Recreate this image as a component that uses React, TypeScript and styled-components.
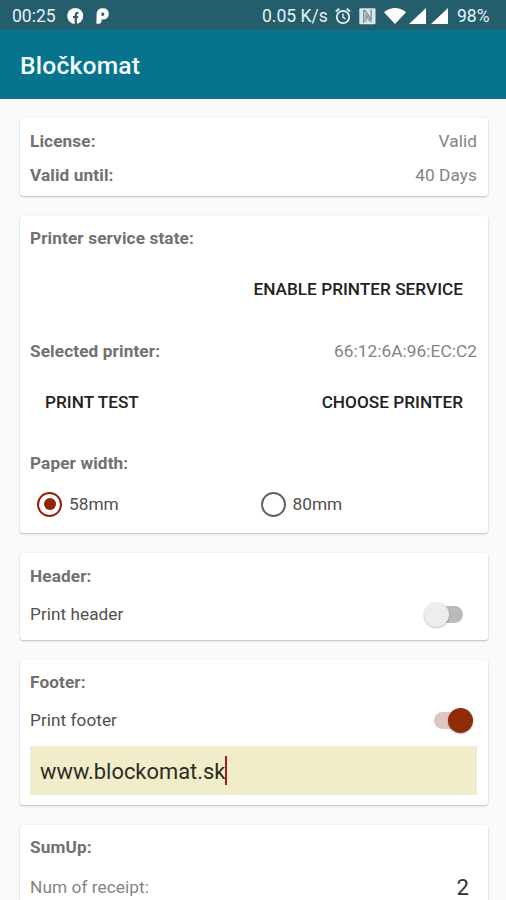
import React, { useState } from "react";
import styled, { createGlobalStyle } from "styled-components";

const GlobalStyle = createGlobalStyle`
  * { box-sizing: border-box; }
  html, body { margin: 0; height: 900px; overflow: hidden; background: #fafafa; }
`;

const Screen = styled.div`
  width: 506px;
  height: 900px;
  overflow: hidden;
  background: #fafafa;
  font-family: Roboto, "Liberation Sans", sans-serif;
  font-size: 17.2px;
  color: #424242;
`;

const StatusBar = styled.div`
  height: 30px;
  padding: 2px 16px 0 12px;
  display: flex;
  align-items: center;
  background: #245e6d;
  color: #e9f1f3;
`;

const StatusText = styled.span<{ $width: number; $gap?: number }>`
  width: ${(p) => p.$width}px;
  margin-left: ${(p) => p.$gap ?? 0}px;
  font-size: 17.5px;
  white-space: nowrap;
`;

const StatusIcon = styled.svg<{ $gap: number }>`
  display: block;
  flex: none;
  margin-left: ${(p) => p.$gap}px;
`;

const Spacer = styled.div`
  flex: 1;
`;

const AppBar = styled.header`
  height: 69px;
  padding: 2px 20px 0;
  display: flex;
  align-items: center;
  background: #06748d;
  border-bottom: 1px solid #2b6678;
`;

const AppTitle = styled.h1`
  margin: 0;
  color: #f4fafb;
  font-size: 24.6px;
  font-weight: 500;
  letter-spacing: 0.22px;
`;

const CardList = styled.main`
  padding: 19px 18px 0 20px;
  display: flex;
  flex-direction: column;
  gap: 20px;
`;

const Card = styled.section<{ $bottom: number }>`
  padding: 6px 11px ${(p) => p.$bottom}px 10px;
  border-radius: 3px;
  background: #fff;
  box-shadow: 0 1px 2px rgba(0, 0, 0, 0.24), 0 0 2px rgba(0, 0, 0, 0.05);
`;

const Row = styled.div<{ $height: number; $top?: number }>`
  height: ${(p) => p.$height}px;
  margin-top: ${(p) => p.$top ?? 0}px;
  display: flex;
  align-items: center;
  justify-content: space-between;
`;

const TitleRow = styled(Row)`
  padding-bottom: 2px;
`;

const Label = styled.span`
  color: #717171;
  font-weight: 700;
  letter-spacing: 0.12px;
`;

const Value = styled.span`
  color: #848484;
  font-size: 17.3px;
  letter-spacing: 0.05px;
`;

const Caption = styled.span`
  color: #505050;
  letter-spacing: 0.05px;
`;

const TextButton = styled.button`
  margin: 0 14px 0 auto;
  padding: 0;
  border: 0;
  background: none;
  color: #222;
  font: 500 17.2px Roboto, "Liberation Sans", sans-serif;
  letter-spacing: 0.02px;

  &:first-child:not(:last-child) {
    margin-left: 15px;
  }
`;

const RadioGroup = styled.div`
  height: 46px;
  padding-left: 7px;
  display: grid;
  grid-template-columns: 223.5px 1fr;
  align-items: center;
`;

const RadioOption = styled.button`
  display: flex;
  align-items: center;
  gap: 7px;
  padding: 0;
  border: 0;
  background: none;
  color: #505050;
  font: 400 17.3px Roboto, "Liberation Sans", sans-serif;
`;

const RadioMark = styled.span<{ $checked: boolean }>`
  width: 25px;
  height: 25px;
  display: flex;
  align-items: center;
  justify-content: center;
  border: 2.3px solid ${(p) => (p.$checked ? "#951d0e" : "#626262")};
  border-radius: 50%;

  &::after {
    content: "";
    width: 12px;
    height: 12px;
    border-radius: 50%;
    background: ${(p) => (p.$checked ? "#932400" : "transparent")};
  }
`;

const SwitchTrack = styled.button<{ $on: boolean }>`
  width: 39px;
  height: 17px;
  margin-right: ${(p) => (p.$on ? 4 : 14)}px;
  padding: 0;
  display: flex;
  align-items: center;
  justify-content: ${(p) => (p.$on ? "flex-end" : "flex-start")};
  border: 0;
  border-radius: 9px;
  background: ${(p) => (p.$on ? "#dfc6bf" : "#bababa")};
`;

const SwitchThumb = styled.span<{ $on: boolean }>`
  width: 25px;
  height: 25px;
  flex: none;
  border-radius: 50%;
  background: ${(p) => (p.$on ? "#8f2b05" : "#ededed")};
  box-shadow: 0 1px 2px rgba(0, 0, 0, 0.26);
`;

const Field = styled.div`
  height: 49px;
  margin-top: 5px;
  padding: 2px 10px 0;
  display: flex;
  align-items: center;
  background: #f1edca;
  color: #2d2c22;
  font-size: 21.9px;
`;

const Caret = styled.span`
  width: 2px;
  height: 29px;
  margin-bottom: 2px;
  background: #a61c17;
`;

const Count = styled.span`
  margin-right: 8px;
  color: #303030;
  font-size: 22.2px;
`;

function Switch({ initial }: { initial: boolean }) {
  const [on, setOn] = useState(initial);
  return (
    <SwitchTrack $on={on} role="switch" aria-checked={on} onClick={() => setOn(!on)}>
      <SwitchThumb $on={on} />
    </SwitchTrack>
  );
}

function FacebookIcon() {
  return (
    <StatusIcon $gap={10} width="17" height="17" viewBox="0 0 17 17">
      <circle cx="8.2" cy="8" r="8" fill="#fff" />
      <path d="M8.8 16V6.9q0-2.3 2.6-2M6 9h5.2" fill="none" stroke="#245e6d" strokeWidth="2.2" />
    </StatusIcon>
  );
}

function ParkingIcon() {
  return (
    <StatusIcon $gap={12} width="14" height="16" viewBox="0 0 14 16">
      <path
        fill="#fff"
        fillRule="evenodd"
        d="M.6 5.8Q.8.2 6.8.2q6 0 6 5.6 0 5.8-6.4 5.8h-.9v2q0 2.1-2.3 2.1H.4ZM5.5 4.4v3.5h1.1q1.8 0 1.8-1.8 0-1.7-1.8-1.7Z"
      />
    </StatusIcon>
  );
}

function AlarmIcon() {
  return (
    <StatusIcon $gap={8} width="16" height="17" viewBox="0 0 16 17" fill="none" stroke="#e9f1f3">
      <circle cx="8" cy="9" r="6.2" strokeWidth="1.8" />
      <path d="M.8 3.6 4.3.8M15.2 3.6 11.7.8" strokeWidth="1.9" />
      <path d="M8 5.6v3.7l2.5 1.6" strokeWidth="1.4" />
    </StatusIcon>
  );
}

function NfcIcon() {
  return (
    <StatusIcon $gap={8} width="17" height="17" viewBox="0 0 17 17">
      <rect x=".3" y=".2" width="16.2" height="16" rx="1" fill="#dce5e8" />
      <path d="M4.7 15V2.6h1.5l5.9 9V1.6" fill="none" stroke="#6f8f99" strokeWidth="1.3" />
      <path d="M6.9 13.7V7.1l4.2 6.4h1.3" fill="none" stroke="#6f8f99" strokeWidth="1.2" />
    </StatusIcon>
  );
}

function WifiIcon() {
  return (
    <StatusIcon $gap={8} width="22" height="16" viewBox="0 0 22 16">
      <path d="M0 4.2Q11-4 22 4.2L11 16Z" fill="#fff" />
    </StatusIcon>
  );
}

function SignalIcon({ gap }: { gap: number }) {
  return (
    <StatusIcon $gap={gap} width="17" height="16" viewBox="0 0 17 16">
      <path d="M17 0v16H0Z" fill="#fff" />
    </StatusIcon>
  );
}

export default function App() {
  const [paper, setPaper] = useState("58mm");
  return (
    <Screen>
      <GlobalStyle />
      <StatusBar>
        <StatusText $width={45}>00:25</StatusText>
        <FacebookIcon />
        <ParkingIcon />
        <Spacer />
        <StatusText $width={65}>0.05 K/s</StatusText>
        <AlarmIcon />
        <NfcIcon />
        <WifiIcon />
        <SignalIcon gap={3} />
        <SignalIcon gap={5} />
        <StatusText $width={33} $gap={9}>98%</StatusText>
      </StatusBar>
      <AppBar>
        <AppTitle>Bločkomat</AppTitle>
      </AppBar>
      <CardList>
        <Card $bottom={4}>
          <Row $height={34}>
            <Label>License:</Label>
            <Value>Valid</Value>
          </Row>
          <Row $height={34}>
            <Label>Valid until:</Label>
            <Value>40 Days</Value>
          </Row>
        </Card>
        <Card $bottom={6}>
          <TitleRow $height={34}>
            <Label>Printer service state:</Label>
          </TitleRow>
          <Row $height={66}>
            <TextButton>ENABLE PRINTER SERVICE</TextButton>
          </Row>
          <Row $height={58}>
            <Label>Selected printer:</Label>
            <Value>66:12:6A:96:EC:C2</Value>
          </Row>
          <Row $height={44}>
            <TextButton>PRINT TEST</TextButton>
            <TextButton>CHOOSE PRINTER</TextButton>
          </Row>
          <TitleRow $height={35} $top={22}>
            <Label>Paper width:</Label>
          </TitleRow>
          <RadioGroup role="radiogroup">
            {["58mm", "80mm"].map((size) => (
              <RadioOption
                key={size}
                role="radio"
                aria-checked={paper === size}
                onClick={() => setPaper(size)}
              >
                <RadioMark $checked={paper === size} />
                {size}
              </RadioOption>
            ))}
          </RadioGroup>
        </Card>
        <Card $bottom={5}>
          <Row $height={34}>
            <Label>Header:</Label>
          </Row>
          <Row $height={42}>
            <Caption>Print header</Caption>
            <Switch initial={false} />
          </Row>
        </Card>
        <Card $bottom={10}>
          <TitleRow $height={33}>
            <Label>Footer:</Label>
          </TitleRow>
          <Row $height={42}>
            <Caption>Print footer</Caption>
            <Switch initial />
          </Row>
          <Field>
            www.blockomat.sk
            <Caret />
          </Field>
        </Card>
        <Card $bottom={10}>
          <TitleRow $height={34}>
            <Label>SumUp:</Label>
          </TitleRow>
          <Row $height={44}>
            <Value>Num of receipt:</Value>
            <Count>2</Count>
          </Row>
        </Card>
      </CardList>
    </Screen>
  );
}
